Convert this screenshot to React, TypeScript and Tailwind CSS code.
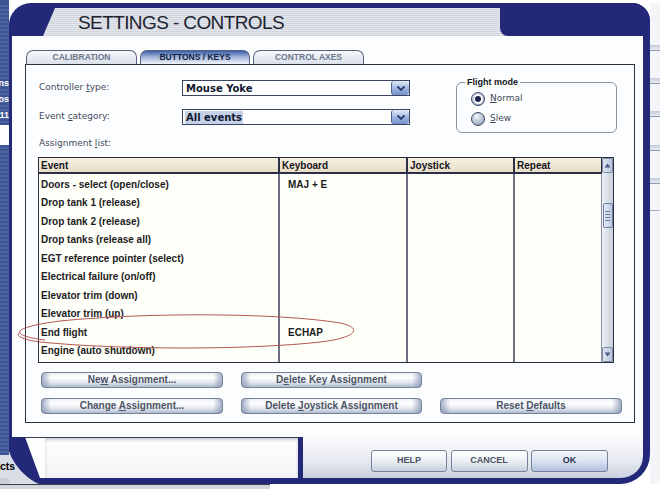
import clsx from 'clsx'

const NAVY = 'bg-[#232878]'

const rows: [string, string][] = [
  ['Doors - select (open/close)', 'MAJ + E'],
  ['Drop tank 1 (release)', ''],
  ['Drop tank 2 (release)', ''],
  ['Drop tanks (release all)', ''],
  ['EGT reference pointer (select)', ''],
  ['Electrical failure (on/off)', ''],
  ['Elevator trim (down)', ''],
  ['Elevator trim (up)', ''],
  ['End flight', 'ECHAP'],
  ['Engine (auto shutdown)', ''],
]

function U({ children }: { children: string }) {
  return <span className="underline underline-offset-[1px]">{children}</span>
}

function Tab({ label, active, className }: { label: string; active?: boolean; className: string }) {
  return (
    <div
      className={clsx(
        'flex h-[14px] items-center justify-center rounded-t-[7px] border border-b-0 border-[#56617b] text-[8.5px] font-bold leading-none',
        active
          ? 'bg-[linear-gradient(to_bottom,#3d5fab,#9db2d9_45%,#f1f4fa)] text-[#141d3c]'
          : 'bg-[linear-gradient(to_bottom,#f6f8fb,#dbe0e9)] text-[#6a778e]',
        className,
      )}
    >
      {label}
    </div>
  )
}

function Select({ value, highlight }: { value: string; highlight?: boolean }) {
  return (
    <div className="flex h-[16px] w-[228px] border border-[#3a4562] bg-white">
      <div className="flex flex-1 items-center pl-[2px]">
        <span
          className={clsx(
            'px-[1px] text-[10px] font-bold leading-[13px] text-[#101830]',
            highlight && 'bg-[#c4d1e7]',
          )}
        >
          {value}
        </span>
      </div>
      <div className="flex w-[18px] items-center justify-center rounded-[3px] border-l border-[#4a5e90] bg-[linear-gradient(to_bottom,#e3ebf8,#9db4dd_55%,#7391cb)]">
        <svg width="10" height="7" viewBox="0 0 10 7">
          <path d="M1.5 1.5 L5 5 L8.5 1.5" fill="none" stroke="#2a3c78" strokeWidth="1.8" />
        </svg>
      </div>
    </div>
  )
}

function Radio({ checked }: { checked?: boolean }) {
  return (
    <span className="flex h-[14px] w-[14px] items-center justify-center rounded-full border border-[#3a4768] bg-[radial-gradient(circle_at_40%_30%,#f3f5f9,#aab6cd_65%,#7b8aaa)]">
      {checked && (
        <span className="flex h-[9px] w-[9px] items-center justify-center rounded-full bg-white">
          <span className="h-[6px] w-[6px] rounded-full bg-[#1a234f]" />
        </span>
      )}
    </span>
  )
}

function Btn({ children }: { children: React.ReactNode }) {
  return (
    <div className="flex h-[16px] items-center justify-center rounded-[4px] border border-[#76839c] bg-[linear-gradient(to_right,rgba(110,128,165,0.6),transparent_5%,transparent_95%,rgba(110,128,165,0.6)),linear-gradient(to_bottom,#eef1f6,#ffffff_35%,#dfe4ed_70%,#b0bbcd)] text-[10px] font-bold leading-none text-[#4c5465]">
      <span className="whitespace-pre">{children}</span>
    </div>
  )
}

function DlgBtn({ children, primary }: { children: string; primary?: boolean }) {
  return (
    <div
      className={clsx(
        'flex h-[22px] items-center justify-center rounded-[3px] border border-[#76829b] text-[9px] font-bold',
        primary
          ? 'w-[77px] bg-[linear-gradient(to_bottom,#f2f5fb,#dbe3f1_50%,#aebfdc)] text-[#2b3550]'
          : 'bg-[linear-gradient(to_bottom,#ffffff,#eceff4_50%,#c6cedc)] text-[#4c5465]',
      )}
    >
      {children}
    </div>
  )
}

function ScrollArrow({ up }: { up?: boolean }) {
  return (
    <div className="flex h-[15px] items-center justify-center rounded-[2px] border border-[#7d8aa6] bg-[linear-gradient(to_right,#dfe6f2,#b7c4dc)]">
      <svg width="7" height="5" viewBox="0 0 7 5">
        <path d={up ? 'M0.5 4.5 L3.5 0.5 L6.5 4.5 Z' : 'M0.5 0.5 L3.5 4.5 L6.5 0.5 Z'} fill="#4a5a80" />
      </svg>
    </div>
  )
}

function AssignmentTable() {
  const cols = 'grid grid-cols-[241px_128px_107px_87px]'
  return (
    <div className="mt-[8px] flex h-[206px] w-[576px] border border-[#2b2f45]">
      <div className="flex w-[563px] flex-col">
        <div className={clsx(cols, 'h-[16px] border-b-2 border-[#2b2f45] bg-[linear-gradient(to_bottom,#f6f0e2,#e9dfc8)] text-[10px] font-bold text-[#15151c]')}>
          {['Event', 'Keyboard', 'Joystick', 'Repeat'].map((h, i) => (
            <div key={h} className={clsx('flex items-center pl-[2px]', i < 3 ? 'border-r-2 border-[#2b2f45]' : 'border-r border-[#2b2f45]')}>
              {h}
            </div>
          ))}
        </div>
        <div className={clsx(cols, 'flex-1 bg-[#fffffa] text-[10px] font-bold text-[#1c1c22]')}>
          <div className="border-r-2 border-[#6d7183] pt-[1px] pl-[2px]">
            {rows.map(([e]) => (
              <div key={e} className="flex h-[18.5px] items-center">{e}</div>
            ))}
          </div>
          <div className="border-r-2 border-[#6d7183] pt-[1px] pl-[8px]">
            {rows.map(([e, k]) => (
              <div key={e} className="flex h-[18.5px] items-center">{k}</div>
            ))}
          </div>
          <div className="border-r-2 border-[#6d7183]" />
          <div className="border-r border-[#8a8ea0]" />
        </div>
      </div>
      <div className="flex w-[11px] flex-col bg-[linear-gradient(to_right,#eef1f5,#c8cfdc)]">
        <ScrollArrow up />
        <div className="flex-1">
          <div className="mx-auto mt-[30px] flex h-[25px] w-[10px] flex-col items-center justify-center gap-[2px] rounded-[2px] border border-[#6f7fa3] bg-[linear-gradient(to_right,#e8eef8,#b9c6de)]">
            <span className="h-px w-[5px] bg-[#6f7fa3]" />
            <span className="h-px w-[5px] bg-[#6f7fa3]" />
            <span className="h-px w-[5px] bg-[#6f7fa3]" />
            <span className="h-px w-[5px] bg-[#6f7fa3]" />
          </div>
        </div>
        <ScrollArrow />
      </div>
    </div>
  )
}

function LeftStrip() {
  const stripes = 'bg-[repeating-linear-gradient(to_bottom,#3c5592_0px,#3c5592_2px,#4a65a2_2px,#4a65a2_4px)]'
  return (
    <div className="relative z-10 flex w-[9px] flex-col text-[9px] font-bold text-white">
      <div className={clsx('h-[72px]', stripes)} />
      <div className={clsx('flex h-[50px] flex-col justify-evenly overflow-hidden whitespace-nowrap', stripes)}>
        <div className="flex justify-end">Options</div>
        <div className="flex justify-end">Videos</div>
        <div className="flex justify-end">2011</div>
      </div>
      <div className="h-[20px] bg-white" />
      <div className={clsx('h-[310px]', stripes)} />
      <div className="flex h-[23px] items-center whitespace-nowrap bg-[#d9dde6] text-[10.5px] text-black">cts</div>
      <div className="flex-1 bg-[#c9ced8]" />
    </div>
  )
}

function RightStrip() {
  const bar = 'h-[6px] border-b border-[#8f9ab0] bg-[linear-gradient(to_bottom,#c2c9d8,#e9ecf2)]'
  return (
    <div className="flex w-[10px] flex-col bg-[#f4f5f8]">
      <div className={clsx('mt-[42px]', bar)} />
      <div className={clsx('mt-[27px]', bar)} />
      <div className={clsx('mt-[27px]', bar)} />
      <div className={clsx('mt-[28px]', bar)} />
      <div className={clsx('mt-[27px]', bar)} />
      <div className="mt-[26px] h-px bg-[#a7afc0]" />
    </div>
  )
}

function Footer() {
  return (
    <div className="flex h-[47px]">
      <svg width="36" height="47" viewBox="0 0 36 47" className="shrink-0">
        <path d="M0 14 C4 28 18 42 30 47 L0 47 Z" fill="#d9dde6" />
        <path d="M16 0 L36 0 L36 41 L31 41 Z" fill="#fdfdfe" />
        <path d="M16 0.5 L36 0.5" stroke="#3b3f52" strokeWidth="1" />
        <path d="M0 0 L16 0 L31 41 L36 41 L36 47 L30 47 C18 42 4 28 0 14 Z" fill="#232878" />
      </svg>
      <div className={clsx('flex flex-1 flex-col rounded-br-[30px] pb-[6px] pr-[7px]', NAVY)}>
        <div className="flex flex-1">
          <div className="w-[253px] border-t border-[#3b3f52] bg-[linear-gradient(to_bottom,#ffffff,#f1f3f6)] shadow-[inset_0_2px_3px_rgba(40,50,80,0.25)]" />
          <div className={clsx('w-[5px]', NAVY)} />
          <div className="flex flex-1 items-start justify-end gap-[3.5px] rounded-br-[22px] bg-[linear-gradient(to_bottom,#fbfcfd,#e6e9f0_60%,#c9d0df)] pr-[35px] pt-[13px]">
            <div className="w-[76px]"><DlgBtn>HELP</DlgBtn></div>
            <div className="w-[77px]"><DlgBtn>CANCEL</DlgBtn></div>
            <DlgBtn primary>OK</DlgBtn>
          </div>
        </div>
      </div>
    </div>
  )
}

function Window() {
  return (
    <div className="flex w-[641px] flex-col">
      {/* title bar */}
      <div className={clsx('flex h-[33px] rounded-tl-[22px] rounded-tr-[18px]', NAVY)}>
        <div className="w-[34px]" />
        <div className="mt-[5px] w-[465px] bg-[repeating-linear-gradient(to_bottom,#e2e5ea_0px,#e2e5ea_1px,#d2d6de_1px,#d2d6de_2px)] pl-[35px] pt-[4px] [clip-path:polygon(12px_0,100%_0,100%_100%,0_100%)]">
          <div className="text-[19px] leading-[22px] tracking-[-0.6px] text-[#202230]">SETTINGS - CONTROLS</div>
        </div>
        <div className={clsx('relative -ml-[8px] flex-1 rounded-bl-[8px] rounded-tr-[18px]', NAVY)} />
      </div>

      {/* body */}
      <div className="flex h-[401px]">
        <div className={clsx('w-[3px]', NAVY)} />
        <div className="flex w-[631px] flex-col bg-[#fcfdfe] pl-[13px] pt-[14px]">
          <div className="flex h-[14px] gap-[3px] pl-[1px]">
            <Tab label="CALIBRATION" className="w-[111px]" />
            <Tab label="BUTTONS / KEYS" active className="w-[110px]" />
            <Tab label="CONTROL AXES" className="w-[111px]" />
          </div>
          <div className="flex h-[359px] w-[610px] flex-col border border-[#2e3240] pl-[12px] pt-[15px]">
            <div className="flex">
              <div className="flex w-[372px] flex-col font-['DejaVu_Sans',sans-serif] text-[9px] text-[#434b5c]">
                <div className="flex h-[16px] items-center">
                  <div className="w-[144px] pl-[1px]">Controller <U>t</U>ype:</div>
                  <Select value="Mouse Yoke" />
                </div>
                <div className="mt-[13px] flex h-[16px] items-center">
                  <div className="w-[144px] pl-[1px]">Event <U>c</U>ategory:</div>
                  <Select value="All events" highlight />
                </div>
                <div className="mt-[12px] h-[12px] pl-[1px] leading-[12px]">Assignment <U>l</U>ist:</div>
              </div>
              <div className="relative ml-[46px] mt-[2px] flex h-[51px] w-[161px] flex-col gap-[6px] rounded-[6px] border border-[#8d929c] pl-[14px] pt-[9px] font-['DejaVu_Sans',sans-serif] text-[9px] text-[#434b5c]">
                <span className="absolute -top-[7px] left-[8px] bg-[#fcfdfe] px-[2px] font-['Liberation_Sans',Arial,sans-serif] text-[9px] font-bold leading-[12px] text-[#15151c]">
                  Flight mode
                </span>
                <div className="flex h-[14px] items-center gap-[5px]">
                  <Radio checked />
                  <span><U>N</U>ormal</span>
                </div>
                <div className="flex h-[14px] items-center gap-[5px]">
                  <Radio />
                  <span><U>S</U>lew</span>
                </div>
              </div>
            </div>

            <AssignmentTable />

            <div className="ml-[3px] mt-[9px] grid grid-cols-[182px_181px_182px] gap-x-[18px] gap-y-[10px]">
              <Btn>Ne<U>w</U> Assignment...</Btn>
              <Btn>D<U>e</U>lete Key Assignment</Btn>
              <div />
              <Btn>Change <U>A</U>ssignment...</Btn>
              <Btn>Delete <U>J</U>oystick Assignment</Btn>
              <Btn>Reset <U>D</U>efaults</Btn>
            </div>
          </div>
        </div>
        <div className={clsx('w-[7px]', NAVY)} />
      </div>

      <Footer />
    </div>
  )
}

export default function App() {
  return (
    <div className="relative flex h-[489px] w-[660px] flex-col overflow-hidden bg-white font-['Liberation_Sans',Arial,sans-serif]">
      <div className="flex h-[3px] overflow-hidden">
        <div className="w-[9px] bg-[#3c5592]" />
        <div className="-mt-[13px] pl-[116px] text-[16px] font-bold leading-[16px] tracking-[1px] text-[#2a2a34]">SETTINGS</div>
      </div>
      <div className="flex h-[481px]">
        <LeftStrip />
        <Window />
        <RightStrip />
      </div>
      <div className="flex h-[5px]">
        <div className="w-[270px] border-t border-[#3a3d48] bg-[#d3d6dd]" />
        <div className="flex-1 bg-white" />
      </div>

      {/* hand-drawn annotation */}
      <svg className="pointer-events-none absolute left-0 top-0" width="660" height="489" viewBox="0 0 660 489">
        <path
          d="M45 340 C12 336 6 328 60 321 C150 312 280 313 340 323 C364 328 356 338 320 342 C250 350 120 350 40 342 C24 340 14 336 20 332"
          fill="none"
          stroke="#b4544f"
          strokeWidth="1"
        />
      </svg>
    </div>
  )
}
